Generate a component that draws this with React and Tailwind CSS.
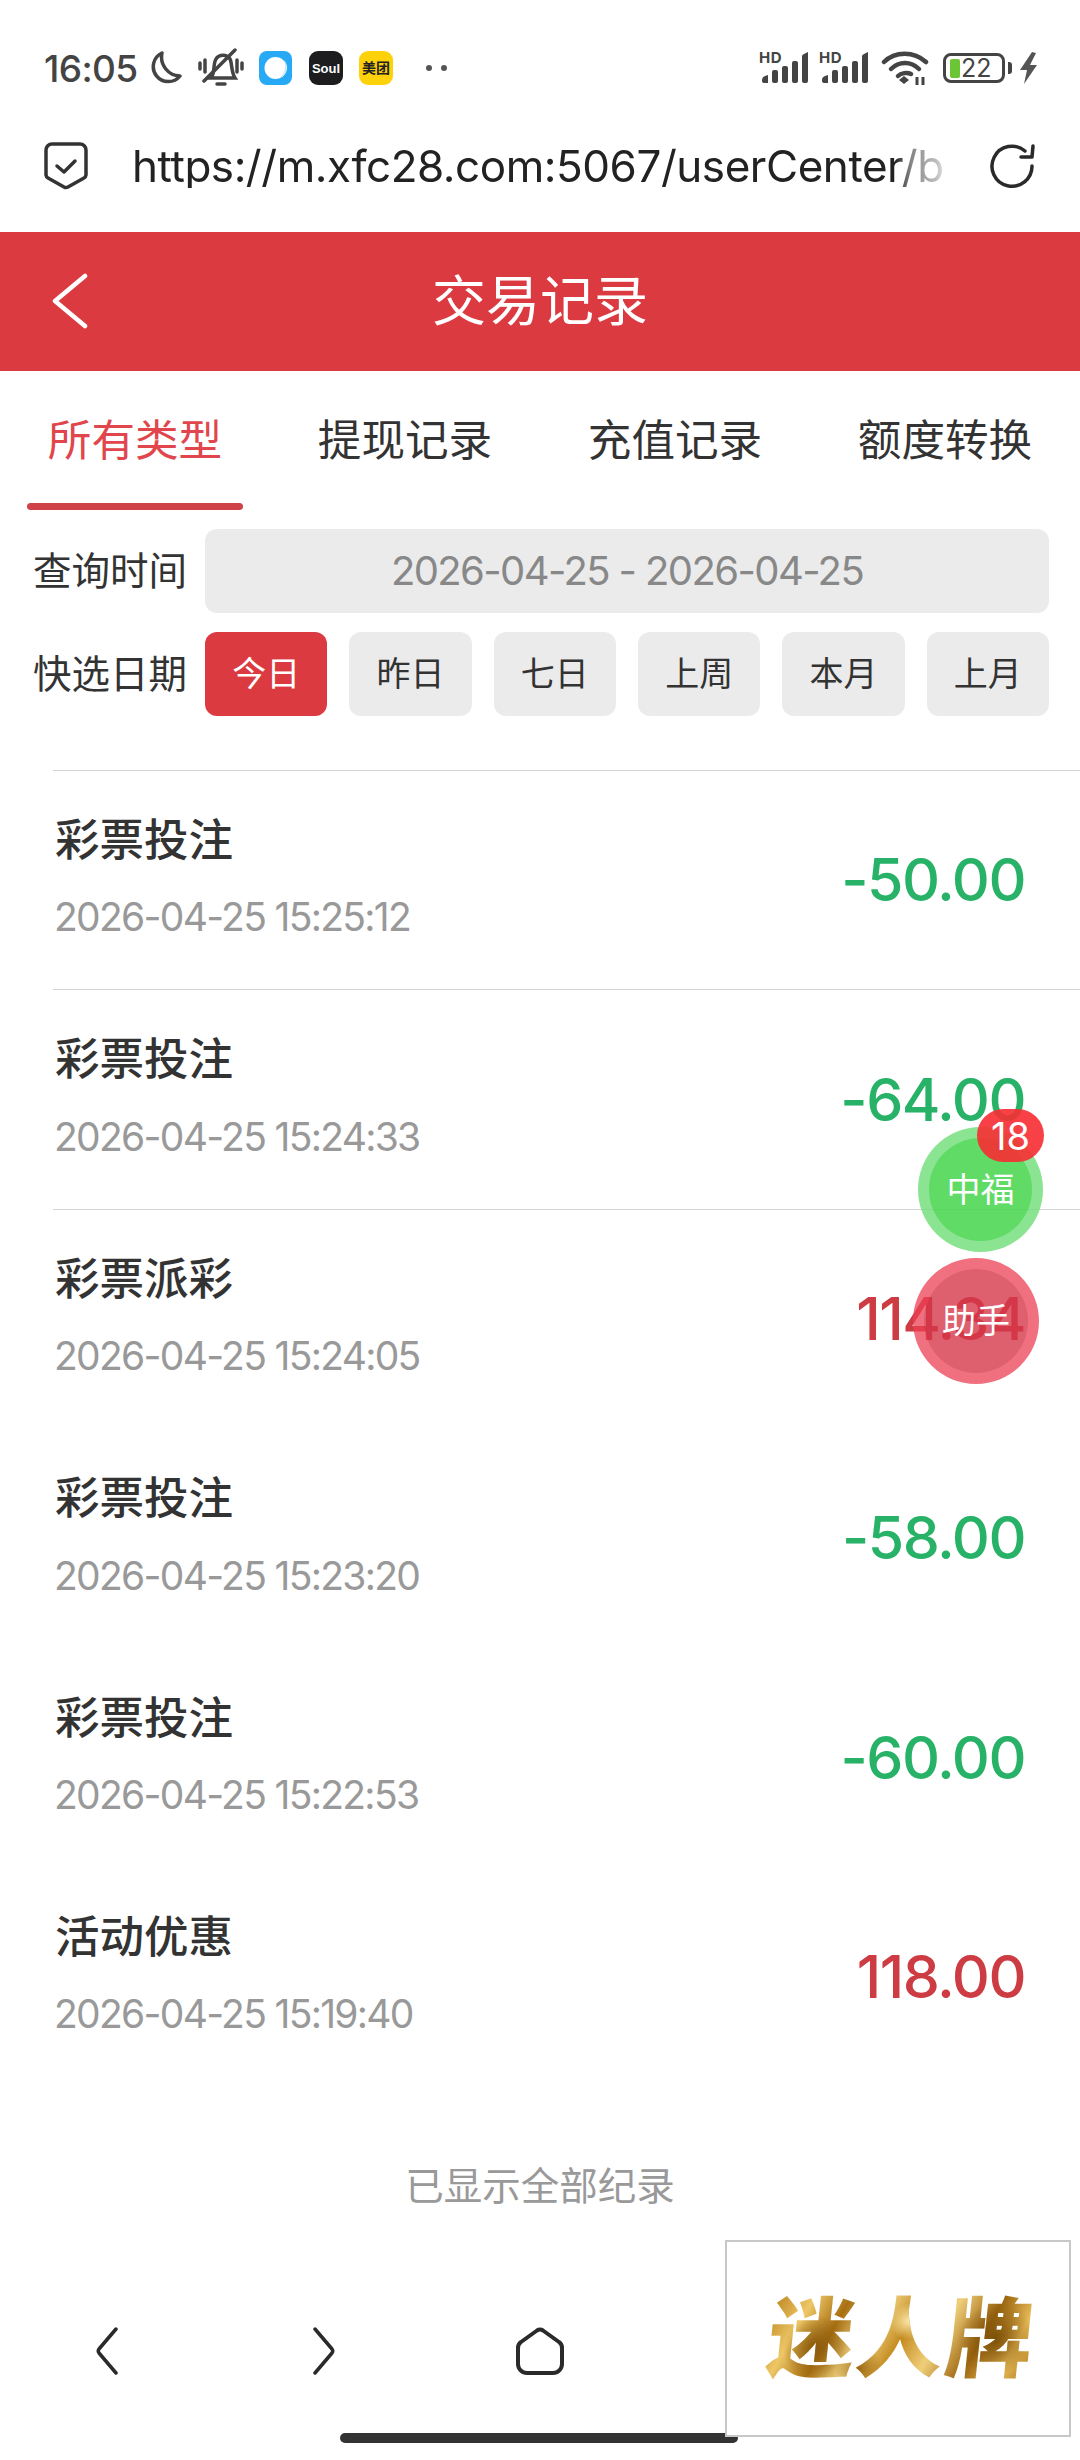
import React from "react";

const tabs = ["所有类型", "提现记录", "充值记录", "额度转换"];
const quick = ["今日", "昨日", "七日", "上周", "本月", "上月"];
const records = [
  { title: "彩票投注", time: "2026-04-25 15:25:12", amount: "-50.00" },
  { title: "彩票投注", time: "2026-04-25 15:24:33", amount: "-64.00" },
  { title: "彩票派彩", time: "2026-04-25 15:24:05", amount: "114.34" },
  { title: "彩票投注", time: "2026-04-25 15:23:20", amount: "-58.00" },
  { title: "彩票投注", time: "2026-04-25 15:22:53", amount: "-60.00" },
  { title: "活动优惠", time: "2026-04-25 15:19:40", amount: "118.00" },
];

const Signal = () => (
  <div className="relative w-[50px] h-[32px]">
    <span className="absolute left-0 top-[-2px] text-[15px] leading-[15px] font-bold tracking-[0.5px] text-[#444]">HD</span>
    <svg width="50" height="32" viewBox="0 0 50 32" className="absolute inset-0">
      <path d="M3 28 Q3 25 6 24 L9 23 V31 H5 Q3 31 3 29 Z" fill="#444" />
      <rect x="13" y="18" width="6" height="13" rx="2" fill="#444" />
      <rect x="23" y="14" width="6" height="17" rx="2" fill="#444" />
      <rect x="33" y="9" width="6" height="22" rx="2" fill="#444" />
      <path d="M43 4 Q43 3 45 2 L49 0 V29 Q49 31 47 31 H45 Q43 31 43 29 Z" fill="#444" />
    </svg>
  </div>
);

const StatusBar = () => (
  <div className="h-[105px] pt-[31px] pl-[44px] pr-[43px] flex items-center justify-between">
    <div className="flex items-center">
      <span className="text-[37px] leading-none font-medium tracking-[-0.6px] text-[#444] w-[104px]">16:05</span>
      <svg width="34" height="34" viewBox="0 0 34 34" fill="none" stroke="#444" strokeWidth="3.5">
        <path d="M14 2 A15 15 0 1 0 32 25 A19 19 0 0 1 14 2 Z" strokeLinejoin="round" />
      </svg>
      <svg width="46" height="40" viewBox="0 0 46 40" fill="none" stroke="#444" strokeWidth="3.5" strokeLinecap="round" className="ml-[16px]">
        <path d="M13 30 C17 26 15 15 18 11 C21 6 29 6 32 11 C34 14 33 24 37 30 Z" />
        <path d="M19 36 H27" />
        <path d="M37 2 L6 33" />
        <path d="M2 15 V21 M7 12 V24 M39 12 V24 M44 15 V21" />
      </svg>
      <svg width="34" height="34" viewBox="0 0 34 34" className="ml-[15px]">
        <rect width="33" height="34" rx="8" fill="#27aaf5" />
        <circle cx="16.5" cy="17" r="11" fill="#fff" />
        <path d="M25 9 A11 11 0 0 1 21 27 A18 18 0 0 0 25 9 Z" fill="#cfe9fb" />
      </svg>
      <div className="ml-[16px] w-[34px] h-[34px] rounded-[9px] bg-[#1d1d1f] flex items-center justify-center text-white text-[13px] leading-none font-bold font-['Liberation_Sans_Narrow','Liberation_Sans',sans-serif]">
        Soul
      </div>
      <div className="ml-[16px] w-[34px] h-[34px] rounded-[9px] bg-[#fdd20a] flex items-center justify-center text-[#222] text-[14px] leading-none font-bold whitespace-nowrap">
        美团
      </div>
      <div className="ml-[33px] flex gap-[9px]">
        <span className="w-[6px] h-[6px] rounded-full bg-[#555]"></span>
        <span className="w-[6px] h-[6px] rounded-full bg-[#555]"></span>
      </div>
    </div>
    <div className="flex items-center">
      <Signal />
      <div className="ml-[10px]"><Signal /></div>
      <svg width="48" height="36" viewBox="0 0 48 36" fill="none" stroke="#444" strokeWidth="4.5" strokeLinecap="round" className="ml-[12px]">
        <path d="M3 12 C14 1 33 1 45 12" />
        <path d="M10 19 C18 11 30 11 38 19" />
        <path d="M17 26 C20 23 26 22 30 24" />
        <path d="M18 30 L23 26 L28 30 L23 34 Z" fill="#444" stroke="none" />
        <path d="M36 27 V35 M42 27 V35" strokeWidth="3" strokeLinecap="butt" />
      </svg>
      <div className="ml-[14px] relative w-[62px] h-[30px] rounded-[8px] border-[3px] border-[#444] flex items-center pl-[4px]">
        <span className="w-[10px] h-[19px] rounded-[2px] bg-[#6cc534]"></span>
        <span className="ml-[1px] text-[25px] leading-none text-[#444]">22</span>
      </div>
      <span className="ml-[3px] w-[4px] h-[12px] rounded-r-[3px] bg-[#444]"></span>
      <svg width="17" height="32" viewBox="0 0 17 32" className="ml-[8px]">
        <path d="M12 0 L0 18 H7 L4 32 L17 13 H10 L16 1 Z" fill="#555" />
      </svg>
    </div>
  </div>
);

const UrlBar = () => (
  <div className="h-[127px] pb-[5px] pl-[44px] pr-[44px] flex items-center">
    <svg width="44" height="48" viewBox="0 0 44 48" fill="none" stroke="#333" strokeWidth="3.5" strokeLinejoin="round" strokeLinecap="round">
      <path d="M8 2 H36 A6 6 0 0 1 42 8 V33 A4 4 0 0 1 40 36 L24 45 A4 4 0 0 1 20 45 L4 36 A4 4 0 0 1 2 33 V8 A6 6 0 0 1 8 2 Z" />
      <path d="M13 24 L20 30 L31 19" />
    </svg>
    <div className="ml-[44px] w-[820px] whitespace-nowrap text-[44px] leading-none tracking-[-0.45px] text-[#222] [mask-image:linear-gradient(90deg,#000_93%,rgba(0,0,0,0.55)_95%,rgba(0,0,0,0.3)_98%,transparent_100%)]">
      https://m.xfc28.com:5067/userCenter/b
    </div>
    <svg width="46" height="46" viewBox="0 0 46 46" fill="none" stroke="#2a2a2a" strokeWidth="3.5" strokeLinecap="round" strokeLinejoin="round" className="ml-auto">
      <path d="M42 23 A20 20 0 1 1 35 8" />
      <path d="M43 3 L42 14 L31 14" />
    </svg>
  </div>
);

const Header = () => (
  <div className="relative h-[139px] bg-[#dc3a41] flex items-center justify-center text-white text-[54px] leading-none">
    <svg width="38" height="56" viewBox="0 0 38 56" fill="none" stroke="#fff" strokeWidth="4.5" strokeLinecap="round" strokeLinejoin="round" className="absolute left-[51px] top-[41px]">
      <path d="M34 3 L4 28 L34 53" />
    </svg>
    交易记录
  </div>
);

const Tabs = () => (
  <div className="grid grid-cols-4 h-[139px] text-[43.6px] leading-none text-[#333]">
    {tabs.map((t, i) => (
      <div key={t} className={`relative flex items-center justify-center ${i === 0 ? "text-[#e0464c]" : ""}`}>
        {t}
        {i === 0 && <span className="absolute left-[27px] bottom-0 w-[216px] h-[7px] rounded-full bg-[#cf4248]"></span>}
      </div>
    ))}
  </div>
);

const Filters = () => (
  <div className="pl-[33px] pr-[31px] pt-[19px] flex flex-col gap-[19px] text-[38.5px] leading-none text-[#333]">
    <div className="flex items-center">
      <span className="w-[172px] whitespace-nowrap">查询时间</span>
      <div className="flex-1 h-[84px] rounded-[12px] bg-[#ebebeb] flex items-center justify-center text-[#888] text-[40px] tracking-[-1.6px]">
        2026-04-25 - 2026-04-25
      </div>
    </div>
    <div className="flex items-center">
      <span className="w-[172px] whitespace-nowrap">快选日期</span>
      <div className="flex-1 grid grid-cols-6 gap-[22px]">
        {quick.map((q, i) => (
          <div key={q} className={`h-[84px] rounded-[12px] flex items-center justify-center text-[34px] ${i === 0 ? "bg-[#dc3a41] text-white" : "bg-[#ebebeb] text-[#333]"}`}>
            {q}
          </div>
        ))}
      </div>
    </div>
  </div>
);

const RecordRow = ({ r, index }) => (
  <div className={`relative h-[219.4px] pl-[55px] pr-[55px] flex items-center justify-between ${index === 0 ? "mt-[54px]" : ""}`}>
    {index < 3 && <span className="absolute left-[53px] right-0 top-0 h-px bg-[#d4d4d4]"></span>}
    <div className="flex flex-col pb-[5px]">
      <span className="text-[44.5px] leading-none text-[#333] font-medium">{r.title}</span>
      <span className="ml-[-1px] mt-[35px] text-[39px] leading-none tracking-[-1.7px] text-[#999]">{r.time}</span>
    </div>
    <span className={`text-[59px] leading-none font-medium tracking-[-1.5px] ${r.amount.startsWith("-") ? "text-[#27b268]" : "text-[#cd3b43]"}`}>
      {r.amount}
    </span>
  </div>
);

const FloatButtons = () => (
  <>
    <div className="absolute left-[918px] top-[1127px] w-[125px] h-[125px] rounded-full bg-[rgba(110,221,117,0.8)] flex items-center justify-center">
      <div className="w-[103px] h-[103px] rounded-full bg-[rgba(51,210,59,0.5)] flex items-center justify-center text-white text-[34px] leading-none">
        中福
      </div>
    </div>
    <div className="absolute left-[977px] top-[1109px] w-[67px] h-[53px] rounded-[27px] bg-[#f72c32]/90 flex items-center justify-center text-white text-[38px] leading-none">
      18
    </div>
    <div className="absolute left-[913px] top-[1258px] w-[126px] h-[126px] rounded-full bg-[rgba(235,64,84,0.75)] flex items-center justify-center">
      <div className="w-[104px] h-[104px] rounded-full bg-[rgba(150,30,40,0.2)] flex items-center justify-center text-white text-[34px] leading-none">
        助手
      </div>
    </div>
  </>
);

const BottomNav = () => (
  <div className="h-[100px] flex items-center">
    <svg width="22" height="48" viewBox="0 0 22 48" fill="none" stroke="#2a2a2a" strokeWidth="3.5" strokeLinecap="round" strokeLinejoin="round" className="ml-[96px]">
      <path d="M20 2 L3 22 Q1.5 24 3 26 L20 46" />
    </svg>
    <svg width="22" height="48" viewBox="0 0 22 48" fill="none" stroke="#2a2a2a" strokeWidth="3.5" strokeLinecap="round" strokeLinejoin="round" className="ml-[195px]">
      <path d="M2 2 L19 22 Q20.5 24 19 26 L2 46" />
    </svg>
    <svg width="48" height="48" viewBox="0 0 48 48" fill="none" stroke="#2a2a2a" strokeWidth="4" strokeLinejoin="round" className="ml-[181px]">
      <path d="M21 3.5 Q24 1.5 27 3.5 L43 15 Q46 17 46 21 V37 A9 9 0 0 1 37 46 H11 A9 9 0 0 1 2 37 V21 Q2 17 5 15 Z" />
    </svg>
  </div>
);

const AdBox = () => (
  <div className="absolute left-[725px] top-[2240px] w-[346px] h-[197px] bg-white border-2 border-[#c8c8c8] flex items-center justify-center">
    <span className="ml-[6px] -skew-x-6 whitespace-nowrap text-[87px] leading-none font-black tracking-[2px] text-transparent bg-clip-text bg-[radial-gradient(circle_at_18%_60%,#8a5a0c_0,transparent_14%),radial-gradient(circle_at_52%_30%,#fbe7a8_0,transparent_12%),radial-gradient(circle_at_85%_50%,#7c5008_0,transparent_16%),radial-gradient(circle_at_35%_85%,#9a6510_0,transparent_12%),linear-gradient(115deg,#b8801a_0%,#eec766_14%,#a86f12_26%,#f3d888_38%,#c48a1f_50%,#f0cf7a_62%,#9c6510_76%,#e8bc58_88%,#a8741a_100%)]">
      迷人牌
    </span>
  </div>
);

export default function App() {
  return (
    <div className="relative w-[1080px] h-[2460px] overflow-hidden bg-white font-['Inter','Noto_Sans_CJK_SC',sans-serif]">
      <StatusBar />
      <UrlBar />
      <Header />
      <Tabs />
      <Filters />
      <div>
        {records.map((r, i) => (
          <RecordRow key={r.time} r={r} index={i} />
        ))}
      </div>
      <div className="mt-[81px] text-center text-[38.5px] leading-none text-[#999]">已显示全部纪录</div>
      <div className="mt-[95px]"><BottomNav /></div>
      <span className="absolute left-[340px] top-[2433px] w-[398px] h-[10px] rounded-full bg-[#333]"></span>
      <FloatButtons />
      <AdBox />
    </div>
  );
}
